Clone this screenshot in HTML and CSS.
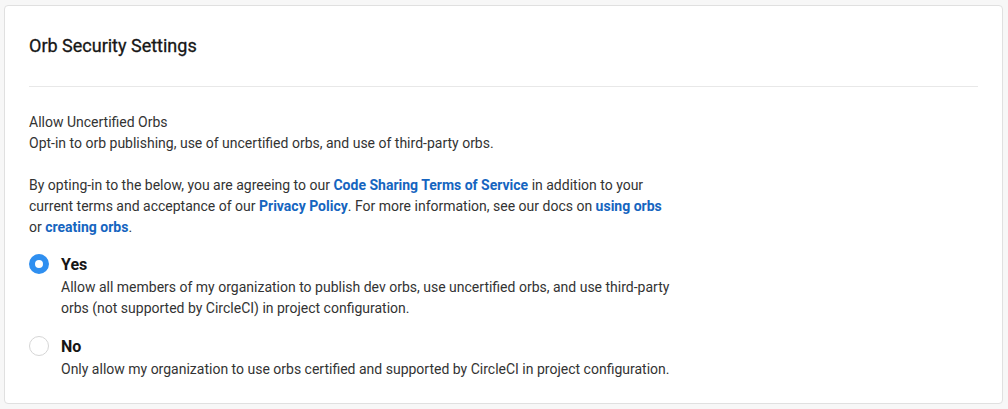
FILE: index.html
```html
<!DOCTYPE html>
<html lang="en">
<head>
<meta charset="utf-8">
<title>Orb Security Settings</title>
<link rel="stylesheet" href="styles.css">
</head>
<body>
<section class="card">
  <h2 class="card-title">Orb Security Settings</h2>
  <hr class="divider">
  <div class="content">
    <p class="intro">Allow Uncertified Orbs<br>Opt-in to orb publishing, use of uncertified orbs, and use of third-party orbs.</p>
    <p class="terms">By opting-in to the below, you are agreeing to our <a href="#">Code Sharing Terms of Service</a> in addition to your current terms and acceptance of our <a href="#">Privacy Policy</a>. For more information, see our docs on <a href="#">using orbs</a> or <a href="#">creating orbs</a>.</p>
    <div class="options">
      <label class="option">
        <span class="radio checked"></span>
        <span class="option-body">
          <span class="option-label">Yes</span>
          <span class="option-desc">Allow all members of my organization to publish dev orbs, use uncertified orbs, and use third-party orbs (not supported by CircleCI) in project configuration.</span>
        </span>
      </label>
      <label class="option">
        <span class="radio"></span>
        <span class="option-body">
          <span class="option-label">No</span>
          <span class="option-desc">Only allow my organization to use orbs certified and supported by CircleCI in project configuration.</span>
        </span>
      </label>
    </div>
  </div>
</section>
</body>
</html>
```
FILE: styles.css
```css
html, body {
  margin: 0;
  padding: 0;
}
body {
  background: #f7f7f7;
  font-family: Roboto, "Liberation Sans", Arial, sans-serif;
  color: #333333;
  padding: 5px 5px 5px 4px;
}
.card {
  background: #ffffff;
  border: 1px solid #e0e0e0;
  border-radius: 4px;
  padding: 28px 24px 24px 24px;
  height: 399px;
  box-sizing: border-box;
}
.card-title {
  margin: 0;
  font-size: 18px;
  line-height: 24px;
  font-weight: 400;
  color: #161616;
  -webkit-text-stroke: 0.3px #161616;
}
.divider {
  border: 0;
  border-top: 1px solid #e8e8e8;
  margin: 28px 0 25px 0;
}
.content {
  max-width: 644px;
  font-size: 14px;
  line-height: 21px;
}
.content p {
  margin: 0;
}
.terms {
  margin-top: 21px !important;
}
.terms a {
  color: #1565c0;
  font-weight: 700;
  text-decoration: none;
}
.options {
  display: flex;
  flex-direction: column;
  gap: 16px;
  margin-top: 15px;
}
.option {
  display: flex;
  align-items: flex-start;
  gap: 12px;
  cursor: pointer;
}
.radio {
  flex: none;
  width: 20px;
  height: 20px;
  border-radius: 50%;
  border: 1px solid #d6d6d6;
  box-sizing: border-box;
  margin-top: 1px;
  background: #ffffff;
}
.radio.checked {
  border: 6px solid #2f8ff0;
}
.option-body {
  display: flex;
  flex-direction: column;
}
.option-label {
  font-size: 16px;
  line-height: 24px;
  font-weight: 700;
  color: #161616;
}
.option-desc {
  font-size: 14px;
  line-height: 21px;
  color: #333333;
}
```
